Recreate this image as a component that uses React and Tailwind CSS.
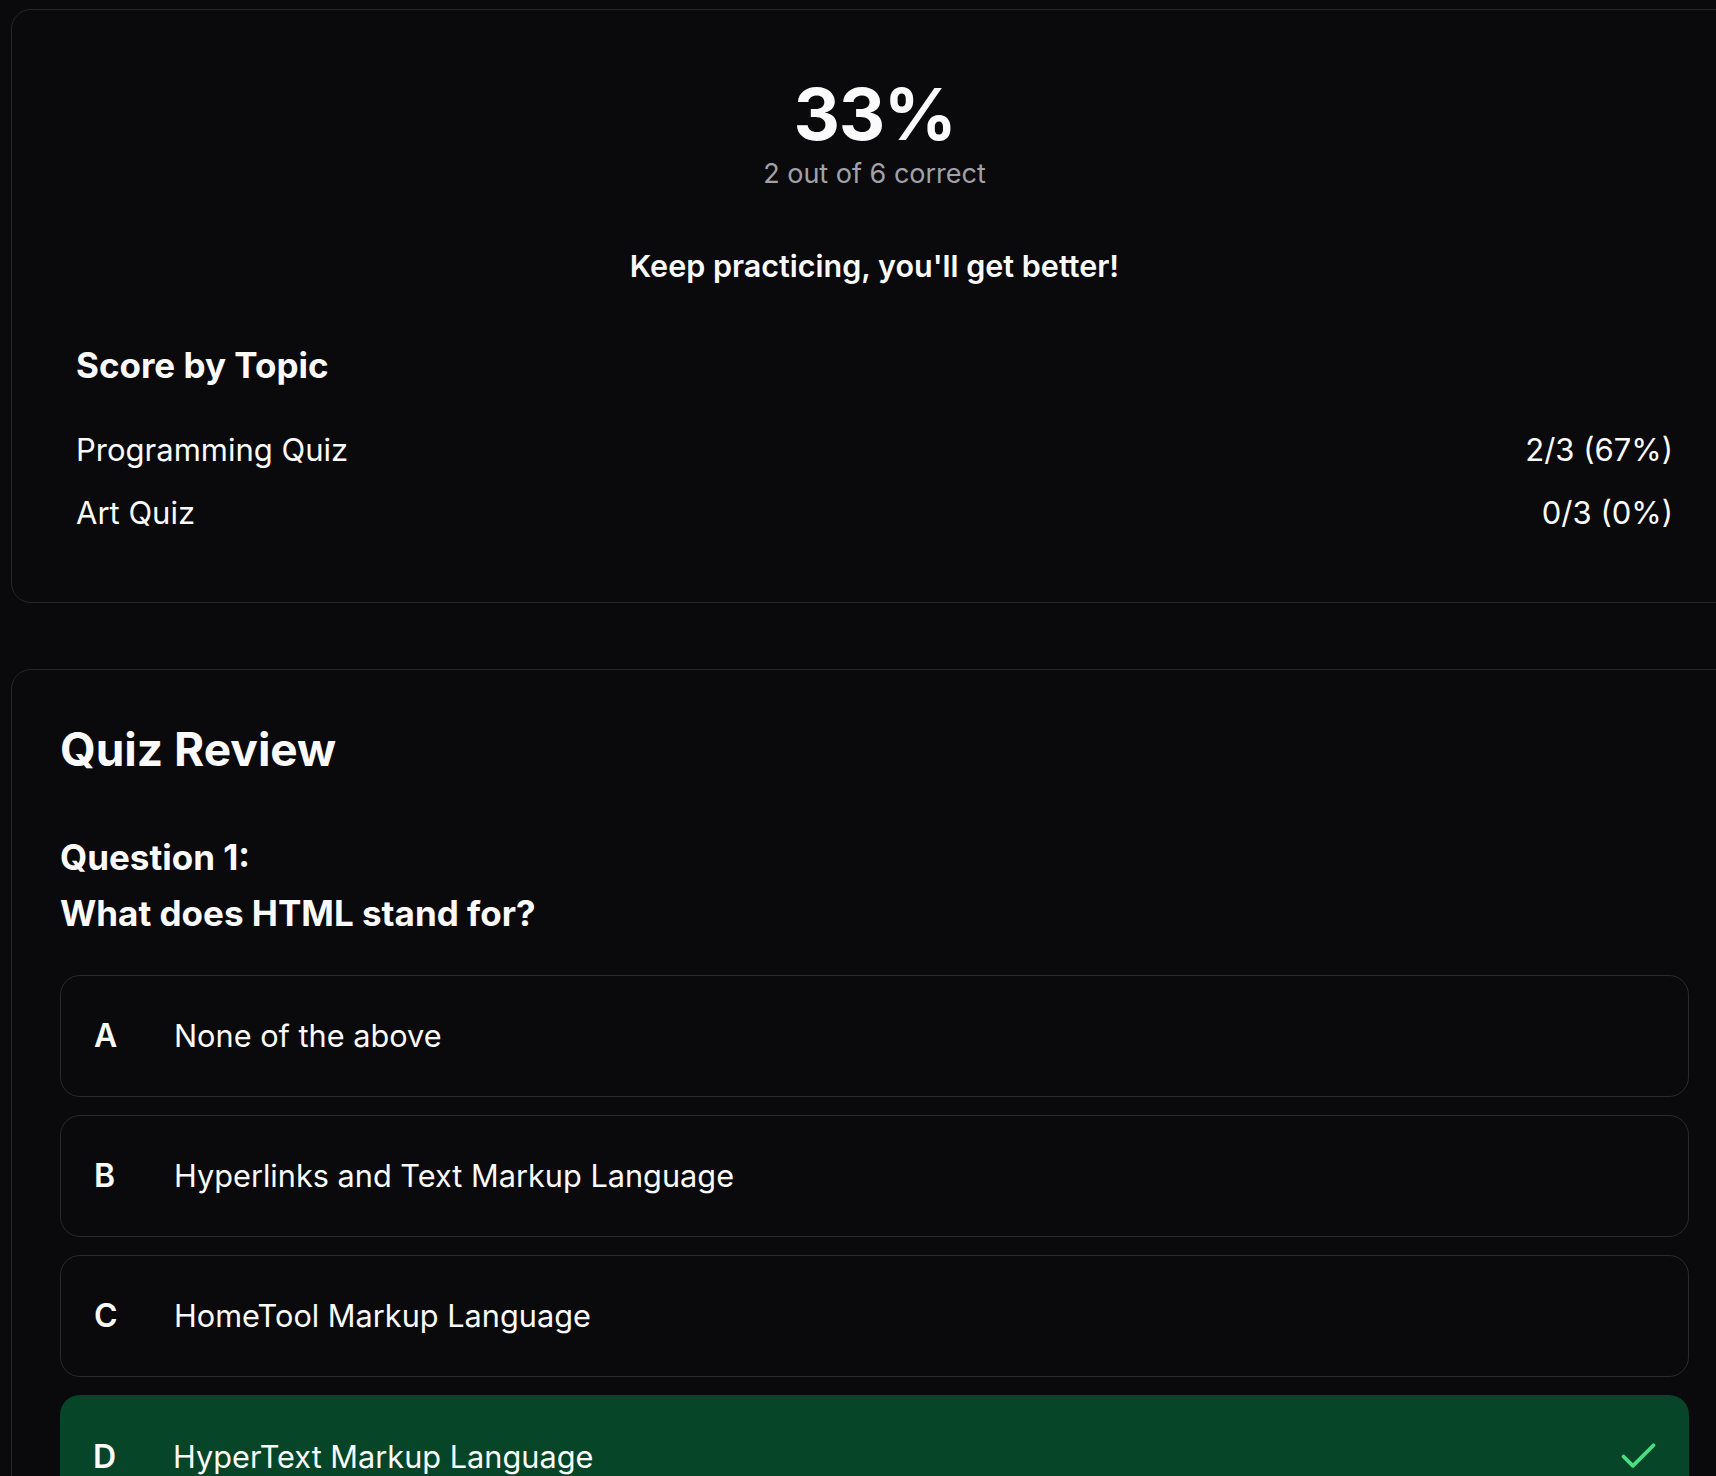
import { Check } from 'lucide-react';

const topics = [
    { name: 'Programming Quiz', score: '2/3 (67%)' },
    { name: 'Art Quiz', score: '0/3 (0%)' },
];

const options = [
    { letter: 'A', text: 'None of the above' },
    { letter: 'B', text: 'Hyperlinks and Text Markup Language' },
    { letter: 'C', text: 'HomeTool Markup Language' },
    { letter: 'D', text: 'HyperText Markup Language', correct: true },
];

const App = () => {
    return (
        <div className="w-[1716px] h-[1476px] overflow-hidden bg-[#0a0a0c] text-[#fafafa] font-['Inter',sans-serif]">
            <div className="w-[1727px] ml-[11px] pt-[9px] flex flex-col gap-[66px]">
                {/* Results */}
                <div className="border border-[#27272a] rounded-[20px] bg-[#0a0a0c] px-[64px] pt-[68px] pb-[69px]">
                    <div className="flex flex-col items-center text-center">
                        <div className="text-[72px] leading-[72px] font-bold tracking-[-0.02em]">33%</div>
                        <div className="mt-[6px] text-[27px] leading-[36px] text-[#a1a1aa]">2 out of 6 correct</div>
                        <div className="mt-[56px] text-[30.5px] leading-[36px] font-semibold">Keep practicing, you'll get better!</div>
                    </div>

                    <h3 className="mt-[59px] text-[35px] leading-[44px] font-bold">Score by Topic</h3>
                    <div className="mt-[43px] flex flex-col gap-[23px]">
                        {topics.map((t) => (
                            <div key={t.name} className="flex justify-between items-center text-[31px] leading-[40px]">
                                <span>{t.name}</span>
                                <span>{t.score}</span>
                            </div>
                        ))}
                    </div>
                </div>

                {/* Review */}
                <div className="border border-[#27272a] rounded-[20px] bg-[#0a0a0c] px-[48px] pt-[52px] pb-[48px]">
                    <h2 className="text-[46px] leading-[55px] font-bold">Quiz Review</h2>
                    <div className="mt-[52px] text-[35px] leading-[56px] font-bold">
                        <p>Question 1:</p>
                        <p>What does HTML stand for?</p>
                    </div>
                    <div className="mt-[34px] flex flex-col gap-[18px]">
                        {options.map((o) => (
                            <div
                                key={o.letter}
                                className={`flex items-center rounded-[20px] pl-[33px] pr-[28px] ${o.correct ? 'bg-[#064527] py-[39px]' : 'border border-[#2a2a2e] py-[40px]'}`}
                            >
                                <span className="w-[80px] shrink-0 text-[32px] leading-[40px] font-semibold">{o.letter}</span>
                                <span className="flex-1 text-[30.7px] leading-[40px]">{o.text}</span>
                                {o.correct && <Check size={45} strokeWidth={2} className="text-[#4ade80]" />}
                            </div>
                        ))}
                    </div>
                </div>
            </div>
        </div>
    );
};

export default App;
